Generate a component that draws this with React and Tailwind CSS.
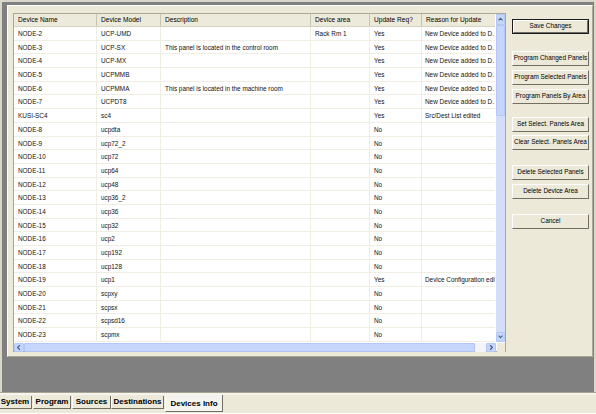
import React from "react";

const rows = [
  ["NODE-2", "UCP-UMD", "", "Rack Rm 1", "Yes", "New Device added to D."],
  ["NODE-3", "UCP-SX", "This panel is located in the control room", "", "Yes", "New Device added to D."],
  ["NODE-4", "UCP-MX", "", "", "Yes", "New Device added to D."],
  ["NODE-5", "UCPMMB", "", "", "Yes", "New Device added to D."],
  ["NODE-6", "UCPMMA", "This panel is located in the machine room", "", "Yes", "New Device added to D."],
  ["NODE-7", "UCPDT8", "", "", "Yes", "New Device added to D."],
  ["KUSI-SC4", "sc4", "", "", "Yes", "Src/Dest List edited"],
  ["NODE-8", "ucpdta", "", "", "No", ""],
  ["NODE-9", "ucp72_2", "", "", "No", ""],
  ["NODE-10", "ucp72", "", "", "No", ""],
  ["NODE-11", "ucp64", "", "", "No", ""],
  ["NODE-12", "ucp48", "", "", "No", ""],
  ["NODE-13", "ucp36_2", "", "", "No", ""],
  ["NODE-14", "ucp36", "", "", "No", ""],
  ["NODE-15", "ucp32", "", "", "No", ""],
  ["NODE-16", "ucp2", "", "", "No", ""],
  ["NODE-17", "ucp192", "", "", "No", ""],
  ["NODE-18", "ucp128", "", "", "No", ""],
  ["NODE-19", "ucp1", "", "", "Yes", "Device Configuration edited"],
  ["NODE-20", "scpxy", "", "", "No", ""],
  ["NODE-21", "scpsx", "", "", "No", ""],
  ["NODE-22", "scpsd16", "", "", "No", ""],
  ["NODE-23", "scpmx", "", "", "No", ""],
];

const cols = [
  { name: "Device Name", w: "w-[83px]" },
  { name: "Device Model", w: "w-[64px]" },
  { name: "Description", w: "w-[150px]" },
  { name: "Device area", w: "w-[59px]" },
  { name: "Update Req?", w: "w-[52px]" },
  { name: "Reason for Update", w: "w-[74px]" },
];

// right hand buttons, mt = gap above each one
const buttons = [
  { label: "Save Changes", mt: "mt-[9px]", def: true },
  { label: "Program Changed Panels", mt: "mt-[17px]" },
  { label: "Program Selected Panels", mt: "mt-[4px]" },
  { label: "Program Panels By Area", mt: "mt-[4px]" },
  { label: "Set Select. Panels Area", mt: "mt-[13px]" },
  { label: "Clear Select. Panels Area", mt: "mt-[3px]" },
  { label: "Delete Selected Panels", mt: "mt-[15px]" },
  { label: "Delete Device Area", mt: "mt-[4px]" },
  { label: "Cancel", mt: "mt-[15px]" },
];

const tabs = [
  { label: "System", w: "w-[34px] ml-[-2px]" },
  { label: "Program", w: "w-[38px] ml-[1px]" },
  { label: "Sources", w: "w-[39px] ml-[1px]" },
  { label: "Destinations", w: "w-[53px]" },
];

const Chevron = ({ dir }) => {
  const d = {
    up: "M2 5.5 L4.5 3 L7 5.5",
    down: "M2 3.5 L4.5 6 L7 3.5",
    left: "M5.5 2 L3 4.5 L5.5 7",
    right: "M3.5 2 L6 4.5 L3.5 7",
  }[dir];
  return (
    <svg width="9" height="9" viewBox="0 0 9 9">
      <path d={d} fill="none" stroke="#4d6185" strokeWidth="1.4" />
    </svg>
  );
};

const ScrollBtn = ({ dir, className }) => (
  <div className={`flex items-center justify-center bg-[#c4d5fb] border border-[#b4c8f6] rounded-[1px] ${className}`}>
    <Chevron dir={dir} />
  </div>
);

const WinButton = ({ label, mt, def }) => (
  <div className={`${mt} h-[15px] w-[77px] ${def ? "border border-[#1c1c1c]" : ""}`}>
    <div className="h-full w-full border-t border-l border-t-white border-l-white border-r border-b border-r-[#716f64] border-b-[#716f64] bg-[#ece9d8] flex items-center justify-center">
      <span className="text-[6.4px] text-black whitespace-nowrap leading-none">{label}</span>
    </div>
  </div>
);

const DeviceGrid = () => (
  <div className="w-[493px] h-[339px] border border-[#aca899] bg-white flex flex-col">
    <div className="flex h-[328px]">
      <div className="w-[482px] overflow-hidden">
        <div className="flex h-[13px] bg-[#ebeadb] border-b border-[#d6d2c2]">
          {cols.map((c) => (
            <div
              key={c.name}
              className={`${c.w} shrink-0 border-r border-[#c7c5b2] px-[4px] text-[6.6px] leading-[12px] text-black whitespace-nowrap overflow-hidden`}
            >
              {c.name}
            </div>
          ))}
        </div>
        {rows.map((r) => (
          <div key={r[0]} className="flex h-[13.7px] border-b border-[#f0eee3]">
            {r.map((cell, i) => (
              <div
                key={i}
                className={`${cols[i].w} shrink-0 border-r border-[#f0eee3] ${i === 5 ? "pl-[3px]" : "px-[4px]"} text-[6.4px] leading-[13px] text-[#111] whitespace-nowrap overflow-hidden`}
              >
                {cell}
              </div>
            ))}
          </div>
        ))}
      </div>
      {/* vertical scroll bar */}
      <div className="w-[9px] ml-[1px] flex flex-col bg-[#d3defb]">
        <ScrollBtn dir="up" className="h-[11px]" />
        <div className="h-[91px] bg-[#c5d5fc] border border-[#b2c5f5] rounded-[1px]" />
        <div className="flex-1" />
        <ScrollBtn dir="down" className="h-[10px]" />
      </div>
    </div>
    {/* horizontal scroll bar */}
    <div className="flex h-[9px] mt-[1px]">
      <ScrollBtn dir="left" className="w-[10px]" />
      <div className="w-[451px] bg-[#c5d5fc] border border-[#b2c5f5] rounded-[1px]" />
      <div className="w-[11px] bg-[#f4f5fb]" />
      <ScrollBtn dir="right" className="w-[10px]" />
      <div className="flex-1 bg-[#ece9d8] ml-[1px]" />
    </div>
  </div>
);

export default function App() {
  return (
    <div className="w-[596px] h-[414px] flex flex-col bg-[#ece9d8] font-['Liberation_Sans',Arial,sans-serif] overflow-hidden">
      <div className="h-[392px] bg-[#808080] border-t-2 border-l-2 border-r-2 border-[#d9d6ca] pl-[5px] pt-[3px]">
        <div className="w-[586px] h-[352px] bg-[#ece9d8] border-t border-l border-white border-r border-b border-r-[#aca899] border-b-[#aca899] flex pl-[5px] pt-[7px]">
          <DeviceGrid />
          <div className="flex flex-col ml-[6px] -mt-[3px]">
            {buttons.map((b) => (
              <WinButton key={b.label} {...b} />
            ))}
          </div>
        </div>
      </div>
      <div className="h-[3px] border-t border-[#a7a493] bg-[#f5f4ee]" />
      <div className="flex-1 flex items-start border-b border-white">
        {tabs.map((t) => (
          <div
            key={t.label}
            className={`${t.w} mt-[1px] h-[13px] border-l border-white border-r border-b border-r-[#716f64] border-b-[#716f64] flex items-center justify-center`}
          >
            <span className="text-[8px] font-bold text-black leading-none whitespace-nowrap">{t.label}</span>
          </div>
        ))}
        <div className="w-[58px] ml-[1px] h-[17px] bg-[#f4f3ee] border-l border-white border-r border-b border-r-[#716f64] border-b-[#716f64] flex items-center justify-center pt-[2px]">
          <span className="text-[8px] font-bold text-black leading-none whitespace-nowrap">Devices Info</span>
        </div>
      </div>
    </div>
  );
}
